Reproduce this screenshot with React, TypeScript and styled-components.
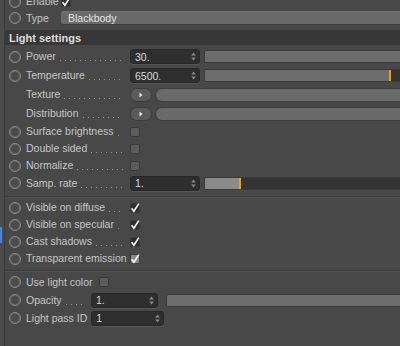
import React from 'react';
import styled, { createGlobalStyle } from 'styled-components';

const GlobalStyle = createGlobalStyle`
  html, body {
    margin: 0;
    padding: 0;
    background: #484848;
  }

  body {
    font-family: 'Liberation Sans', Arial, sans-serif;
    -webkit-font-smoothing: antialiased;
  }
`;

const Page = styled.div`
  width: 400px;
  height: 346px;

  display: flex;

  overflow: hidden;
  background-color: #484848;
`;

const Gutter = styled.div`
  width: 4px;
  padding-top: 227px;

  display: flex;
  flex-direction: column;

  background-color: #4c4c4c;
`;

const BlueMark = styled.div`
  width: 2px;
  height: 16px;

  background-color: #4f82cf;
`;

const Panel = styled.div`
  flex: 1;
  min-width: 0;

  display: flex;
  flex-direction: column;

  border-left: 1px solid #3a3a3a;
`;

const Row = styled.div<{
  $h: number;
  $mt?: number;
}>`
  height: ${(props) => props.$h}px;
  margin-top: ${(props) => props.$mt || 0}px;
  padding-left: 4px;

  display: flex;
  align-items: center;
  flex-shrink: 0;
`;

const Radio = styled.div<{
  $hidden?: boolean;
}>`
  width: 12px;
  height: 12px;
  margin-right: 5px;

  box-sizing: border-box;
  flex-shrink: 0;
  border-radius: 50%;
  border: 1px solid ${(props) => (props.$hidden ? 'transparent' : '#8c8c8c')};
  background-color: ${(props) => (props.$hidden ? 'transparent' : '#4b4b4b')};
  box-shadow: ${(props) => (props.$hidden ? 'none' : 'inset 0 0 0 1px #646464')};
`;

const Label = styled.div<{
  $w?: number;
  $mr: number;
}>`
  width: ${(props) => (props.$w ? `${props.$w}px` : 'auto')};
  margin-right: ${(props) => props.$mr}px;

  display: flex;
  align-items: center;
  flex-shrink: 0;

  font-size: 10.5px;
  line-height: 13px;
  color: #c6c6c6;
  white-space: nowrap;
`;

const Leader = styled.span`
  flex: 1;
  min-width: 0;
  height: 1px;
  margin: 8px 3px 0 4px;

  background-image: linear-gradient(to right, #959595 1px, transparent 1px);
  background-size: 5px 1px;
  background-repeat: repeat-x;
`;

const Dropdown = styled.div`
  flex: 1;
  height: 14px;
  padding-left: 7px;

  display: flex;
  align-items: center;

  box-sizing: border-box;
  border-radius: 3px 0 0 3px;
  background-color: #6a6a6a;
  border-top: 1px solid #737373;
  border-bottom: 1px solid #3d3d3d;

  font-size: 10.5px;
  color: #e4e4e4;
`;

const Header = styled.div`
  height: 15px;
  margin-top: 4px;
  padding-left: 4px;

  display: flex;
  align-items: center;
  flex-shrink: 0;

  background-color: #373737;

  font-size: 11px;
  font-weight: 700;
  color: #dedede;
`;

const NumberField = styled.div<{
  $w: number;
}>`
  width: ${(props) => props.$w}px;
  height: 15px;
  padding: 0 3px 0 4px;

  display: flex;
  align-items: center;
  justify-content: space-between;
  flex-shrink: 0;

  box-sizing: border-box;
  border-radius: 3px;
  background-color: #2e2e2e;
  border: 1px solid #282828;
  box-shadow: 0 1px 0 #565656;

  font-size: 10.5px;
  color: #dadada;
`;

const Slider = styled.div<{
  $gap: number;
  $fill: string;
  $pos?: number;
}>`
  flex: 1;
  height: 13px;
  margin-left: ${(props) => props.$gap}px;

  box-sizing: border-box;
  border: 1px solid #3b3b3b;
  border-right: none;
  border-radius: 2px 0 0 2px;

  background: ${(props) =>
    props.$pos === undefined
      ? props.$fill
      : `linear-gradient(to right, ${props.$fill} 0 ${props.$pos}px, #f0a200 ${props.$pos}px ${
          props.$pos + 2
        }px, #333333 ${props.$pos + 2}px)`};
`;

const RoundButton = styled.div`
  width: 22px;
  height: 14px;

  display: flex;
  align-items: center;
  justify-content: center;
  flex-shrink: 0;

  box-sizing: border-box;
  border-radius: 7px;
  background-color: #5b5b5b;
  border: 1px solid #3c3c3c;
`;

const Pill = styled.div`
  flex: 1;
  height: 14px;
  margin-left: 3px;

  box-sizing: border-box;
  border-radius: 7px 0 0 7px;
  background-color: #6a6a6a;
  border: 1px solid #3e3e3e;
  border-right: none;
`;

const Check = styled.div<{
  $on?: boolean;
  $light?: boolean;
}>`
  width: 10px;
  height: 10px;

  display: flex;
  align-items: center;
  justify-content: center;
  flex-shrink: 0;

  box-sizing: border-box;
  border-radius: 2px;
  border: 1px solid #3a3a3a;
  background-color: ${(props) =>
    props.$light ? '#8a8a8a' : props.$on ? '#2f2f2f' : '#5c5c5c'};
`;

const Separator = styled.div<{
  $mt: number;
}>`
  height: 1px;
  margin-top: ${(props) => props.$mt}px;

  flex-shrink: 0;
  background-color: #3a3a3a;
  border-bottom: 1px solid #525252;
`;

function Spinner() {
  return (
    <svg width="5" height="9" viewBox="0 0 5 9">
      <path d="M2.5 0.5 L4.8 3.5 L0.2 3.5 Z" fill="#8a8a8a" />
      <path d="M2.5 8.5 L4.8 5.5 L0.2 5.5 Z" fill="#8a8a8a" />
    </svg>
  );
}

function Tick() {
  return (
    <svg width="10" height="10" viewBox="0 0 10 10" style={{ overflow: 'visible' }}>
      <path d="M1.6 5.2 L3.9 8.2 L8.8 0.6" stroke="#f2f2f2" strokeWidth="1.7" fill="none" />
    </svg>
  );
}

function Arrow() {
  return (
    <svg width="4" height="6" viewBox="0 0 4 6">
      <path d="M0.5 0.5 L3.5 3 L0.5 5.5 Z" fill="#e8e8e8" />
    </svg>
  );
}

function FieldLabel({ text, w, mr, dots = true }: { text: string; w?: number; mr: number; dots?: boolean }) {
  return (
    <Label $w={w} $mr={mr}>
      {text}
      {dots && <Leader />}
    </Label>
  );
}

export default function App() {
  return (
    <>
      <GlobalStyle />
      <Page>
        <Gutter>
          <BlueMark />
        </Gutter>

        <Panel>
          <Row $h={17} $mt={-7}>
            <Radio />
            <FieldLabel text="Enable" w={35} mr={0} dots={false} />
            <Check $on>
              <Tick />
            </Check>
          </Row>

          <Row $h={16}>
            <Radio />
            <FieldLabel text="Type" w={35} mr={0} dots={false} />
            <Dropdown>Blackbody</Dropdown>
          </Row>

          <Header>Light settings</Header>

          <Row $h={19} $mt={2}>
            <Radio />
            <FieldLabel text="Power" w={100} mr={4} />
            <NumberField $w={70}>
              30.
              <Spinner />
            </NumberField>
            <Slider $gap={4} $fill="#6d6d6d" />
          </Row>

          <Row $h={19}>
            <Radio />
            <FieldLabel text="Temperature" w={100} mr={4} />
            <NumberField $w={70}>
              6500.
              <Spinner />
            </NumberField>
            <Slider $gap={4} $fill="#6d6d6d" $pos={184} />
          </Row>

          <Row $h={19}>
            <Radio $hidden />
            <FieldLabel text="Texture" w={100} mr={4} />
            <RoundButton>
              <Arrow />
            </RoundButton>
            <Pill />
          </Row>

          <Row $h={19}>
            <Radio $hidden />
            <FieldLabel text="Distribution" w={100} mr={4} />
            <RoundButton>
              <Arrow />
            </RoundButton>
            <Pill />
          </Row>

          <Row $h={17}>
            <Radio />
            <FieldLabel text="Surface brightness" w={100} mr={4} />
            <Check />
          </Row>

          <Row $h={17}>
            <Radio />
            <FieldLabel text="Double sided" w={100} mr={4} />
            <Check />
          </Row>

          <Row $h={17}>
            <Radio />
            <FieldLabel text="Normalize" w={100} mr={4} />
            <Check />
          </Row>

          <Row $h={18}>
            <Radio />
            <FieldLabel text="Samp. rate" w={100} mr={4} />
            <NumberField $w={70}>
              1.
              <Spinner />
            </NumberField>
            <Slider $gap={4} $fill="#8a8a8a" $pos={34} />
          </Row>

          <Separator $mt={4} />

          <Row $h={17} $mt={1}>
            <Radio />
            <FieldLabel text="Visible on diffuse" w={100} mr={4} />
            <Check $on>
              <Tick />
            </Check>
          </Row>

          <Row $h={17}>
            <Radio />
            <FieldLabel text="Visible on specular" w={100} mr={4} />
            <Check $on>
              <Tick />
            </Check>
          </Row>

          <Row $h={17}>
            <Radio />
            <FieldLabel text="Cast shadows" w={100} mr={4} />
            <Check $on>
              <Tick />
            </Check>
          </Row>

          <Row $h={17}>
            <Radio />
            <FieldLabel text="Transparent emission" w={100} mr={4} />
            <Check $light>
              <Tick />
            </Check>
          </Row>

          <Separator $mt={3} />

          <Row $h={18} $mt={1}>
            <Radio />
            <FieldLabel text="Use light color" mr={6} dots={false} />
            <Check />
          </Row>

          <Row $h={18}>
            <Radio />
            <FieldLabel text="Opacity" w={60} mr={5} />
            <NumberField $w={67}>
              1.
              <Spinner />
            </NumberField>
            <Slider $gap={8} $fill="#6d6d6d" />
          </Row>

          <Row $h={18}>
            <Radio />
            <FieldLabel text="Light pass ID" mr={4} dots={false} />
            <NumberField $w={73}>
              1
              <Spinner />
            </NumberField>
          </Row>
        </Panel>
      </Page>
    </>
  );
}
